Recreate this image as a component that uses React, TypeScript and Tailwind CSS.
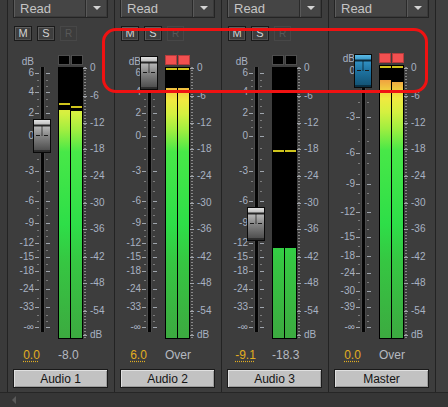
import React from "react";

type Mark = [string, number];

const Y0 = 50;

const FADER_LABELS: Mark[] = [
  ["6", 73], ["4", 92], ["2", 113], ["0", 136], ["-3", 171], ["-6", 201], ["-9", 223],
  ["-12", 243], ["-15", 257], ["-18", 271], ["-24", 289], ["-33", 307], ["-∞", 327],
];
const FADER_MINORS = [80, 86, 99, 106, 120, 127, 148, 159, 181, 191, 208, 215, 230, 236, 250, 264, 280, 298, 315, 321];

const MASTER_LABELS: Mark[] = [
  ["0", 71], ["-3", 117], ["-6", 153], ["-9", 184], ["-12", 212], ["-15", 237], ["-18", 256],
  ["-24", 273], ["-30", 291], ["-39", 307], ["-∞", 327],
];
const MASTER_MINORS = [86, 102, 129, 141, 163, 174, 193, 203, 220, 229, 246, 264, 282, 299, 315, 321];

const METER_LABELS: Mark[] = [
  ["0", 68], ["-6", 96], ["-12", 123], ["-18", 149], ["-24", 176], ["-30", 203], ["-36", 229],
  ["-42", 257], ["-48", 283], ["-54", 311], ["dB", 335],
];

interface Chan { peak: number; fill: number }

interface StripData {
  name: string;
  left: string;
  right: string;
  cap: number;
  master?: boolean;
  clip: boolean;
  chans: [Chan, Chan];
}

const STRIPS: StripData[] = [
  { name: "Audio 1", left: "0.0", right: "-8.0", cap: 136, clip: false, chans: [{ peak: 103, fill: 110 }, { peak: 106, fill: 111 }] },
  { name: "Audio 2", left: "6.0", right: "Over", cap: 73, clip: true, chans: [{ peak: 68, fill: 88 }, { peak: 68, fill: 88 }] },
  { name: "Audio 3", left: "-9.1", right: "-18.3", cap: 224, clip: false, chans: [{ peak: 150, fill: 248 }, { peak: 150, fill: 248 }] },
  { name: "Master", left: "0.0", right: "Over", cap: 71, master: true, clip: true, chans: [{ peak: 66, fill: 80 }, { peak: 66, fill: 82 }] },
];

function Dropdown() {
  return (
    <div className="-mt-[3px] ml-[5px] flex h-[21px] w-[95px] border border-[#242424] bg-[#454545] shadow-[inset_1px_1px_0_#5c5c5c,inset_-1px_-1px_0_#3a3a3a]">
      <div className="flex flex-1 items-center pl-[6px] pt-[1px] text-[13px] leading-[15px] text-[#c4c4c4]">Read</div>
      <div className="flex w-[22px] items-center justify-center border-l border-[#2a2a2a] shadow-[inset_1px_0_0_#595959]">
        <div className="h-0 w-0 border-x-[4px] border-t-[4px] border-x-transparent border-t-[#d4d4d4]" />
      </div>
    </div>
  );
}

function Btn({ label, dim }: { label: string; dim?: boolean }) {
  return dim ? (
    <div className="flex h-[15px] w-[17px] items-center justify-center border border-[#474747] bg-[#3c3c3c] text-[10px] leading-none text-[#585858]">
      {label}
    </div>
  ) : (
    <div className="flex h-[15px] w-[18px] items-center justify-center border border-[#1a1a1a] bg-[#3e3e3e] text-[11px] leading-none text-[#d2d2d2] shadow-[inset_1px_1px_0_#5e5e5e,inset_-1px_-1px_0_#505050]">
      {label}
    </div>
  );
}

function Cap({ center, blue }: { center: number; blue?: boolean }) {
  return (
    <div
      className={
        blue
          ? "absolute left-[25px] h-[34px] w-[18px] border border-[#0a0a0a] bg-[linear-gradient(to_bottom,#5cbbe6_0px,#3d9ccb_4px,#0b2a3c_5px,#0b2a3c_6px,#2f8ec0_7px,#1e72a0_50%,#125070_100%)]"
          : "absolute left-[25px] h-[34px] w-[18px] border border-[#0a0a0a] bg-[linear-gradient(to_bottom,#e2e2e2_0px,#c2c2c2_4px,#262626_5px,#262626_6px,#b4b4b4_7px,#858585_50%,#484848_100%)]"
      }
      style={{ top: center - Y0 - 17 }}
    >
      <div className="absolute left-[7px] top-[6px] h-[10px] w-[2px] bg-[#000000]/30" />
      <div className="absolute left-[2px] top-[15px] h-[1px] w-[4px] bg-[#1a1a1a]" />
      <div className="absolute right-[2px] top-[15px] h-[1px] w-[4px] bg-[#1a1a1a]" />
      <div className="absolute bottom-0 left-0 right-0 h-[2px] bg-[#000000]/40" />
    </div>
  );
}

function FaderScale({ master, cap }: { master?: boolean; cap: number }) {
  const labels = master ? MASTER_LABELS : FADER_LABELS;
  const minors = master ? MASTER_MINORS : FADER_MINORS;
  const dbY = master ? 58.5 : 61.5;
  const trackTop = master ? 60 : 67;
  return (
    <div className="relative h-full w-[44px]">
      <span
        className="absolute left-0 w-[26px] text-right text-[10px] leading-[12px] text-[#a8b2c2]"
        style={{ top: dbY - Y0 - 6 }}
      >
        dB
      </span>
      <div
        className="absolute left-[32px] w-[5px] border-x border-[#4a4a4a] bg-[#050505]"
        style={{ top: trackTop - Y0, height: 332 - trackTop }}
      />
      {minors.map((y) => (
        <React.Fragment key={"m" + y}>
          <div className="absolute left-[29px] h-[1px] w-[2px] bg-[#7c7c7c]" style={{ top: y - Y0 }} />
          <div className="absolute left-[38px] h-[1px] w-[2px] bg-[#7c7c7c]" style={{ top: y - Y0 }} />
        </React.Fragment>
      ))}
      {labels.map(([t, y]) => (
        <React.Fragment key={t}>
          <span
            className="absolute left-0 w-[26px] text-right text-[10px] leading-[12px] text-[#a8b2c2]"
            style={{ top: y - Y0 - 6 }}
          >
            {t}
          </span>
          <div className="absolute left-[27px] h-[1px] w-[4px] bg-[#9ea4ac]" style={{ top: y - Y0 }} />
          <div className="absolute left-[38px] h-[1px] w-[4px] bg-[#9ea4ac]" style={{ top: y - Y0 }} />
        </React.Fragment>
      ))}
      <Cap center={cap} blue={master} />
    </div>
  );
}

function Channel({ chTop, c }: { chTop: number; c: Chan }) {
  const b1 = Math.max(0, c.peak - chTop);
  const b2 = Math.max(0, c.fill - (chTop + b1 + 2));
  return (
    <div className="flex w-[11px] flex-col bg-[linear-gradient(to_bottom,#f07830_0%,#f0a040_5%,#f0d040_9%,#f0ea40_12%,#d4f040_17%,#a0ee40_23%,#48e848_31%,#2ede48_58%,#36c642_72%,#3caa40_100%)]">
      <div className="bg-black" style={{ height: b1 }} />
      <div className="h-[2px] bg-[#cfc41c]" />
      <div className="bg-black" style={{ height: b2 }} />
    </div>
  );
}

function Meter({ s }: { s: StripData }) {
  const meterTop = s.master ? 65 : 67;
  const boxTop = s.master ? 53 : 55;
  return (
    <div className="relative ml-[6px] h-full w-[25px]">
      <div className="absolute left-0 flex gap-[1px]" style={{ top: boxTop - Y0 }}>
        {[0, 1].map((i) =>
          s.clip ? (
            <div key={i} className="h-[10px] w-[12px] border border-[#b43c3c] bg-[#f25050]" />
          ) : (
            <div key={i} className="h-[10px] w-[12px] border border-[#4e4e4e] bg-black" />
          )
        )}
      </div>
      <div
        className="absolute left-0 flex w-[25px] gap-[1px] bg-black p-[1px]"
        style={{ top: meterTop - Y0, height: 339 - meterTop }}
      >
        <Channel chTop={meterTop + 1} c={s.chans[0]} />
        <Channel chTop={meterTop + 1} c={s.chans[1]} />
      </div>
    </div>
  );
}

function MeterScale() {
  return (
    <div className="relative h-full w-[30px]">
      <div
        className="absolute left-[1px] w-[2px] bg-[repeating-linear-gradient(to_bottom,#8a8a8a_0px,#8a8a8a_1px,transparent_1px,transparent_3px)]"
        style={{ top: 67 - Y0, height: 339 - 67 }}
      />
      {METER_LABELS.map(([t, y]) => (
        <React.Fragment key={t}>
          <div className="absolute left-0 h-[1px] w-[4px] bg-[#a0a4aa]" style={{ top: y - Y0 }} />
          <span
            className="absolute left-[7px] whitespace-nowrap text-[10px] leading-[12px] text-[#a8b2c2]"
            style={{ top: y - Y0 - 6 }}
          >
            {t}
          </span>
        </React.Fragment>
      ))}
    </div>
  );
}

function Strip({ s }: { s: StripData }) {
  return (
    <div className="flex h-full w-[107px] flex-col border-l border-[#232323] bg-[#3d3d3d]">
      <Dropdown />
      {s.master ? (
        <div className="mt-[8px] h-[15px]" />
      ) : (
        <div className="mt-[8px] flex h-[15px] gap-[5px] pl-[6px]">
          <Btn label="M" />
          <Btn label="S" />
          <Btn label="R" dim />
        </div>
      )}
      <div className="mt-[9px] flex h-[292px]">
        <FaderScale master={s.master} cap={s.cap} />
        <Meter s={s} />
        <MeterScale />
      </div>
      <div className="mt-[6px] flex h-[14px] items-center text-[12px] leading-[14px]">
        <div className="w-[47px] text-center">
          <span className="text-[#e2ae22] underline decoration-dotted decoration-[#e2ae22] underline-offset-[2px]">
            {s.left}
          </span>
        </div>
        <span className="ml-[3px] text-[#b5b9c0]">{s.right}</span>
      </div>
      <div className="ml-[5px] mt-[7px] flex h-[19px] w-[95px] items-center justify-center border border-[#1a1a1a] bg-[#c2c2c2] text-[12px] leading-none text-[#141414] shadow-[inset_1px_1px_0_#e0e0e0,inset_-1px_-1px_0_#9c9c9c]">
        {s.name}
      </div>
    </div>
  );
}

export default function App() {
  return (
    <div className="relative h-[407px] w-[448px] overflow-hidden bg-[#3c3c3c] font-['Liberation_Sans',Arial,sans-serif]">
      <div className="flex h-[392px]">
        <div className="h-full w-[7px] bg-[#3a3a3a]" />
        {STRIPS.map((s) => (
          <Strip key={s.name} s={s} />
        ))}
        <div className="h-full flex-1 border-l border-[#232323] bg-[#3f3f3f]" />
      </div>
      <div className="flex h-[15px] items-center border-t border-[#262626] bg-[#363636] pl-[12px]">
        <div className="h-0 w-0 border-y-[4px] border-r-[4px] border-y-transparent border-r-[#5a5a5a]" />
      </div>
      <div className="absolute left-[102px] top-[28px] h-[65px] w-[326px] rounded-[14px] border-[3px] border-[#f01212]" />
    </div>
  );
}
